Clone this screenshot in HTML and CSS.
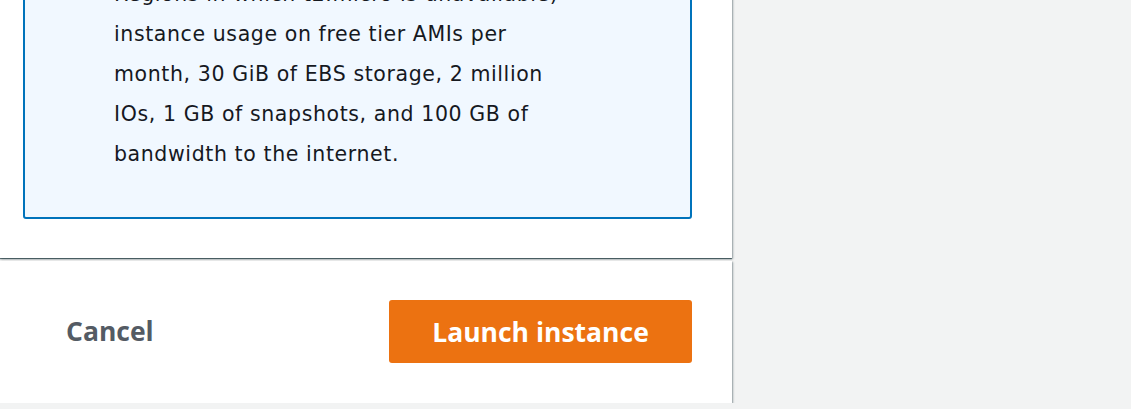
FILE: index.html
```html
<!DOCTYPE html>
<html lang="en">
<head>
<meta charset="utf-8">
<title>Launch instance</title>
<link rel="stylesheet" href="styles.css">
</head>
<body>
<div class="page">
  <section class="card summary">
    <div class="info-box">
      <p class="info-text">750 hours of t2.micro (or t3.micro in the<br>Regions in which t2.micro is unavailable)<br>instance usage on free tier AMIs per<br>month, 30 GiB of EBS storage, 2 million<br>IOs, 1 GB of snapshots, and 100 GB of<br>bandwidth to the internet.</p>
    </div>
  </section>
  <footer class="card actions">
    <button class="btn-link" type="button">Cancel</button>
    <button class="btn-primary" type="button">Launch instance</button>
  </footer>
</div>
</body>
</html>
```

FILE: styles.css
```css
html, body {
  margin: 0;
  padding: 0;
}
body {
  background: #f2f3f3;
  font-family: "Open Sans", "Noto Sans", sans-serif;
  color: #16191f;
  overflow: hidden;
}
.page {
  width: 732px;
  margin-top: -100px;
  display: flex;
  flex-direction: column;
  gap: 3px;
}
.card {
  background: #ffffff;
  box-shadow: 0 1px 1px 0 rgba(0, 28, 36, 0.5), 1px 1px 2px 0 rgba(0, 28, 36, 0.35), -1px 1px 1px 0 rgba(0, 28, 36, 0.2);
}
.summary {
  padding: 0 40px 39px 23px;
}
.info-box {
  background: #f1f8ff;
  border: 2px solid #0073bb;
  border-radius: 3px;
  padding: 32px 20px 43px 89px;
}
.info-text {
  margin: 0;
  font-family: "DejaVu Sans", "Open Sans", sans-serif;
  font-size: 20.5px;
  letter-spacing: 0.6px;
  line-height: 40px;
  white-space: nowrap;
  color: #16191f;
}
.actions {
  height: 142px;
  display: flex;
  align-items: center;
  justify-content: space-between;
  padding: 0 40px 0 66px;
  box-sizing: border-box;
}
.btn-link {
  background: none;
  border: none;
  padding: 0;
  font-family: inherit;
  font-weight: 700;
  font-size: 26.5px;
  color: #545b64;
  cursor: pointer;
  margin-top: -3px;
}
.btn-primary {
  width: 303px;
  height: 63px;
  background: #ec7211;
  border: none;
  border-radius: 3px;
  color: #ffffff;
  font-family: inherit;
  font-weight: 700;
  font-size: 26.5px;
  cursor: pointer;
  margin-top: -1px;
}
```
